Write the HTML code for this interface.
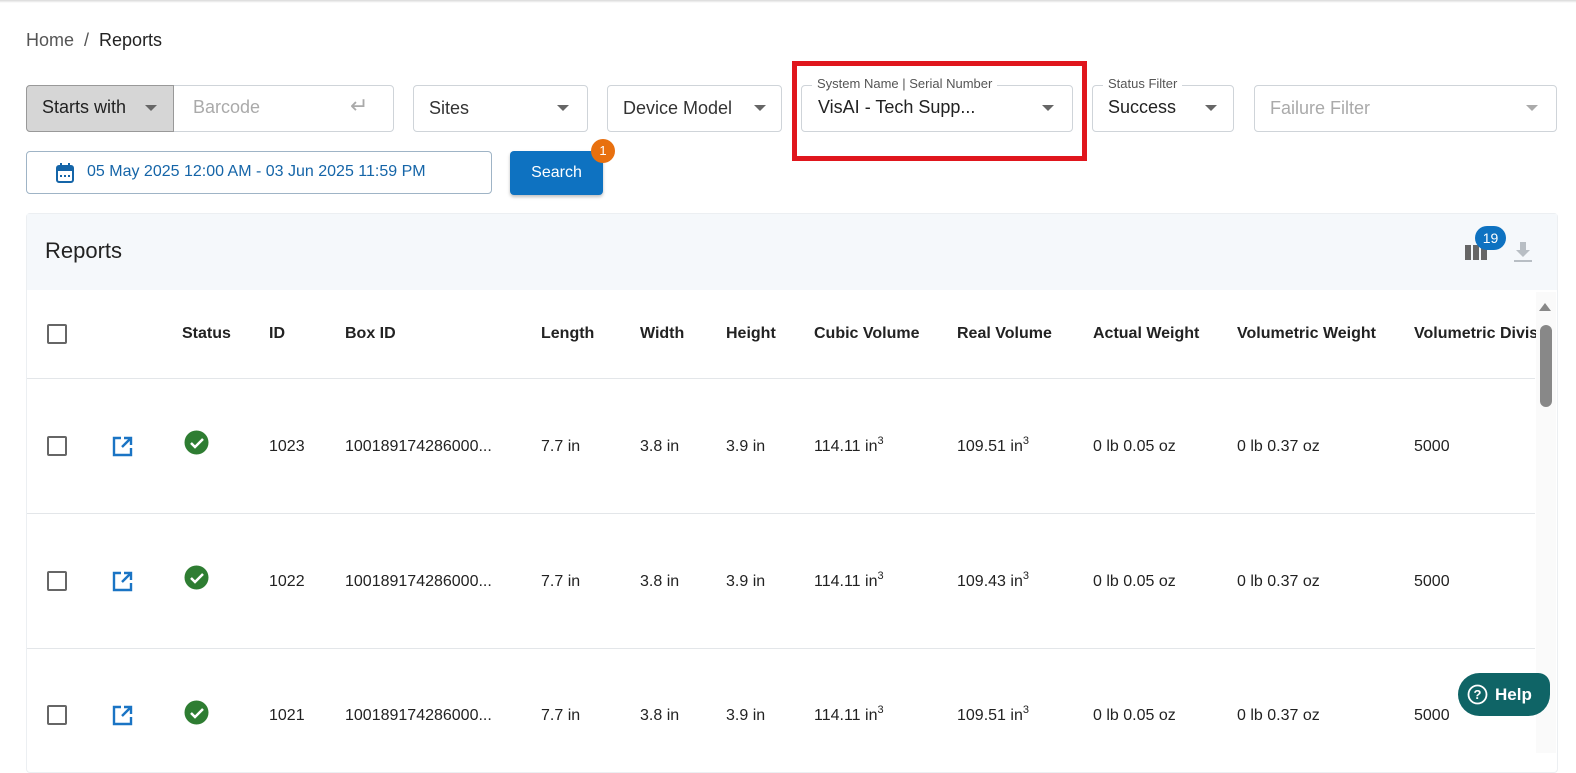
<!DOCTYPE html>
<html><head><meta charset="utf-8"><style>
*{box-sizing:border-box;margin:0;padding:0}
body{width:1576px;height:753px;overflow:hidden;background:#fff;font-family:"Liberation Sans",Roboto,sans-serif;color:#222;position:relative}
.a{position:absolute}
.box{position:absolute;border:1px solid #cfd4d9;border-radius:4px;background:#fff}
.lbl{position:absolute;font-size:18px;color:#333}
.caret{position:absolute;width:0;height:0;border-left:6px solid transparent;border-right:6px solid transparent;border-top:6px solid #666}
.leg{position:absolute;font-size:13px;color:#555;background:#fff;padding:0 5px}
.th{position:absolute;top:325px;font-size:16px;font-weight:bold;color:#222}
.td{position:absolute;font-size:16px;color:#222;line-height:18px}
.cb{position:absolute;width:20px;height:20px;border:2px solid #666;border-radius:2px}
.hr{position:absolute;left:27px;width:1508px;height:1px;background:#e3e6e9}
.s{font-size:11px;position:relative;top:-7px}
</style></head><body>
<div class="a" style="left:0;top:0;width:1576px;height:3px;background:linear-gradient(#d8d8d8,#fff)"></div>
<div class="a" style="left:26px;top:30px;font-size:18px;color:#555">Home &nbsp;/&nbsp; <span style="color:#222">Reports</span></div>

<div class="box" style="left:26px;top:85px;width:368px;height:47px"></div>
<div class="a" style="left:26px;top:85px;width:148px;height:47px;background:#d6d6d6;border:1px solid #999;border-radius:4px 0 0 4px"></div>
<div class="lbl" style="left:42px;top:97px;color:#222">Starts with</div>
<div class="caret" style="left:145px;top:105px"></div>
<div class="lbl" style="left:193px;top:97px;color:#aaa">Barcode</div>
<div class="lbl" style="left:350px;top:93px;color:#aaa;font-size:22px">↵</div>

<div class="box" style="left:413px;top:85px;width:175px;height:47px"></div>
<div class="lbl" style="left:429px;top:98px">Sites</div>
<div class="caret" style="left:557px;top:105px"></div>

<div class="box" style="left:607px;top:85px;width:175px;height:47px"></div>
<div class="lbl" style="left:623px;top:98px">Device Model</div>
<div class="caret" style="left:754px;top:105px"></div>

<div class="a" style="left:792px;top:61px;width:295px;height:100px;border:5px solid #e0161d"></div>
<div class="box" style="left:801px;top:85px;width:272px;height:47px"></div>
<div class="leg" style="left:812px;top:76px">System Name | Serial Number</div>
<div class="lbl" style="left:818px;top:97px;color:#222">VisAI - Tech Supp...</div>
<div class="caret" style="left:1042px;top:105px"></div>

<div class="box" style="left:1092px;top:85px;width:142px;height:47px"></div>
<div class="leg" style="left:1103px;top:76px">Status Filter</div>
<div class="lbl" style="left:1108px;top:97px;color:#222">Success</div>
<div class="caret" style="left:1205px;top:105px"></div>

<div class="box" style="left:1254px;top:85px;width:303px;height:47px"></div>
<div class="lbl" style="left:1270px;top:98px;color:#aaa">Failure Filter</div>
<div class="caret" style="left:1526px;top:105px;border-top-color:#aaa"></div>

<div class="box" style="left:26px;top:151px;width:466px;height:43px;border-color:#9fb4c6"></div>
<svg class="a" style="left:56px;top:163px" width="18" height="20" viewBox="0 0 18 20"><rect x="1" y="3" width="16" height="16" rx="2" fill="none" stroke="#1565a8" stroke-width="2"/><rect x="1" y="3" width="16" height="5" fill="#1565a8"/><rect x="4" y="0" width="2" height="5" fill="#1565a8"/><rect x="12" y="0" width="2" height="5" fill="#1565a8"/><rect x="4" y="12" width="2" height="2" fill="#1565a8"/><rect x="8" y="12" width="2" height="2" fill="#1565a8"/><rect x="12" y="12" width="2" height="2" fill="#1565a8"/></svg>
<div class="a" style="left:87px;top:163px;font-size:16px;color:#1565a8">05 May 2025 12:00 AM - 03 Jun 2025 11:59 PM</div>
<div class="a" style="left:510px;top:151px;width:93px;height:44px;background:#0e72c1;border-radius:4px;box-shadow:0 2px 3px rgba(0,0,0,.25);color:#fff;font-size:16px;text-align:center;line-height:43px">Search</div>
<div class="a" style="left:591px;top:139px;width:24px;height:24px;border-radius:50%;background:#e8700f;color:#fff;font-size:13px;text-align:center;line-height:24px">1</div>

<div class="a" style="left:26px;top:213px;width:1532px;height:560px;border:1px solid #eceff2;border-radius:4px"></div>
<div class="a" style="left:27px;top:214px;width:1530px;height:76px;background:#f5f8fb"></div>
<div class="a" style="left:45px;top:238px;font-size:22px;color:#222">Reports</div>
<svg class="a" style="left:1465px;top:242px" width="24" height="20"><rect x="0" y="3" width="6" height="15" fill="#666"/><rect x="8" y="3" width="6" height="15" fill="#666"/><rect x="16" y="3" width="6" height="15" fill="#666"/></svg>
<div class="a" style="left:1475px;top:226px;width:31px;height:24px;border-radius:12px;background:#0e72c1;color:#fff;font-size:14px;text-align:center;line-height:24px">19</div>
<svg class="a" style="left:1513px;top:240px" width="20" height="24"><path d="M7 2h6v8h4l-7 7-7-7h4z" fill="#b8bec4"/><rect x="1" y="20" width="18" height="2" fill="#b8bec4"/></svg>

<div class="a" style="left:1536px;top:292px;width:20px;height:461px;background:#fafafa"></div>
<div class="a" style="left:1539px;top:303px;width:0;height:0;border-left:6px solid transparent;border-right:6px solid transparent;border-bottom:8px solid #888"></div>
<div class="a" style="left:1540px;top:325px;width:12px;height:82px;border-radius:6px;background:#888"></div>

<div class="cb" style="left:47px;top:324px"></div>
<div class="th" style="left:182px">Status</div>
<div class="th" style="left:269px">ID</div>
<div class="th" style="left:345px">Box ID</div>
<div class="th" style="left:541px">Length</div>
<div class="th" style="left:640px">Width</div>
<div class="th" style="left:726px">Height</div>
<div class="th" style="left:814px">Cubic Volume</div>
<div class="th" style="left:957px">Real Volume</div>
<div class="th" style="left:1093px">Actual Weight</div>
<div class="th" style="left:1237px">Volumetric Weight</div>
<div class="th" style="left:1414px;width:122px;overflow:hidden;white-space:nowrap">Volumetric Division</div>
<div class="hr" style="top:378px"></div>
<div class="hr" style="top:513px"></div>
<div class="hr" style="top:648px"></div>

<div class="cb" style="left:47px;top:436px"></div>
<svg class="a" style="left:112px;top:436px" width="21" height="21" viewBox="0 0 21 21"><path d="M9 2H2v17h17v-7" fill="none" stroke="#1a74c4" stroke-width="2.4"/><path d="M12 2h7v7M19 2l-9 9" fill="none" stroke="#1a74c4" stroke-width="2.4"/></svg>
<svg class="a" style="left:184px;top:430px" width="25" height="25"><circle cx="12.5" cy="12.5" r="12" fill="#2e7d32"/><path d="M7 13l4 4 8-8" fill="none" stroke="#fff" stroke-width="2.5"/></svg>
<div class="td" style="left:269px;top:438px">1023</div><div class="td" style="left:345px;top:438px">100189174286000...</div><div class="td" style="left:541px;top:438px">7.7 in</div><div class="td" style="left:640px;top:438px">3.8 in</div><div class="td" style="left:726px;top:438px">3.9 in</div><div class="td" style="left:814px;top:438px">114.11 in<span class="s">3</span></div><div class="td" style="left:957px;top:438px">109.51 in<span class="s">3</span></div><div class="td" style="left:1093px;top:438px">0 lb 0.05 oz</div><div class="td" style="left:1237px;top:438px">0 lb 0.37 oz</div><div class="td" style="left:1414px;top:438px">5000</div>

<div class="cb" style="left:47px;top:571px"></div>
<svg class="a" style="left:112px;top:571px" width="21" height="21" viewBox="0 0 21 21"><path d="M9 2H2v17h17v-7" fill="none" stroke="#1a74c4" stroke-width="2.4"/><path d="M12 2h7v7M19 2l-9 9" fill="none" stroke="#1a74c4" stroke-width="2.4"/></svg>
<svg class="a" style="left:184px;top:565px" width="25" height="25"><circle cx="12.5" cy="12.5" r="12" fill="#2e7d32"/><path d="M7 13l4 4 8-8" fill="none" stroke="#fff" stroke-width="2.5"/></svg>
<div class="td" style="left:269px;top:573px">1022</div><div class="td" style="left:345px;top:573px">100189174286000...</div><div class="td" style="left:541px;top:573px">7.7 in</div><div class="td" style="left:640px;top:573px">3.8 in</div><div class="td" style="left:726px;top:573px">3.9 in</div><div class="td" style="left:814px;top:573px">114.11 in<span class="s">3</span></div><div class="td" style="left:957px;top:573px">109.43 in<span class="s">3</span></div><div class="td" style="left:1093px;top:573px">0 lb 0.05 oz</div><div class="td" style="left:1237px;top:573px">0 lb 0.37 oz</div><div class="td" style="left:1414px;top:573px">5000</div>

<div class="cb" style="left:47px;top:705px"></div>
<svg class="a" style="left:112px;top:705px" width="21" height="21" viewBox="0 0 21 21"><path d="M9 2H2v17h17v-7" fill="none" stroke="#1a74c4" stroke-width="2.4"/><path d="M12 2h7v7M19 2l-9 9" fill="none" stroke="#1a74c4" stroke-width="2.4"/></svg>
<svg class="a" style="left:184px;top:700px" width="25" height="25"><circle cx="12.5" cy="12.5" r="12" fill="#2e7d32"/><path d="M7 13l4 4 8-8" fill="none" stroke="#fff" stroke-width="2.5"/></svg>
<div class="td" style="left:269px;top:707px">1021</div><div class="td" style="left:345px;top:707px">100189174286000...</div><div class="td" style="left:541px;top:707px">7.7 in</div><div class="td" style="left:640px;top:707px">3.8 in</div><div class="td" style="left:726px;top:707px">3.9 in</div><div class="td" style="left:814px;top:707px">114.11 in<span class="s">3</span></div><div class="td" style="left:957px;top:707px">109.51 in<span class="s">3</span></div><div class="td" style="left:1093px;top:707px">0 lb 0.05 oz</div><div class="td" style="left:1237px;top:707px">0 lb 0.37 oz</div><div class="td" style="left:1414px;top:707px">5000</div>

<div class="a" style="left:1458px;top:673px;width:92px;height:43px;background:#0f6466;border-radius:22px 12px 22px 22px;color:#fff;font-size:17px;font-weight:bold;line-height:43px;padding-left:37px">Help</div>
<svg class="a" style="left:1467px;top:684px" width="21" height="21"><circle cx="10.5" cy="10.5" r="9" fill="none" stroke="#fff" stroke-width="1.8"/><text x="10.5" y="15" text-anchor="middle" font-size="13" font-weight="bold" fill="#fff" font-family="Liberation Sans">?</text></svg>
</body></html>
